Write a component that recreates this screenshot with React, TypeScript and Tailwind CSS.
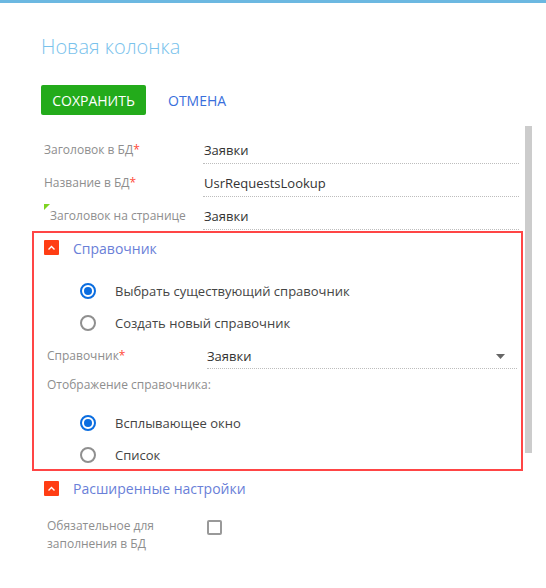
import React from "react";

const font = { fontFamily: '"Open Sans", "Liberation Sans", sans-serif' };

function Radio({ checked }: { checked?: boolean }) {
  return checked ? (
    <span className="w-[16px] h-[16px] rounded-full border-[2px] border-[#0a6de0] flex items-center justify-center shrink-0">
      <span className="w-[8px] h-[8px] rounded-full bg-[#0a6de0]" />
    </span>
  ) : (
    <span className="w-[16px] h-[16px] rounded-full border-[2px] border-[#8f8f8f] shrink-0" />
  );
}

function Chevron() {
  return (
    <span className="w-[15px] h-[15px] bg-[#ff3d14] flex items-center justify-center shrink-0 rounded-[1px]">
      <svg width="9" height="6" viewBox="0 0 9 6" fill="none">
        <path d="M1.5 4.5 L4.5 1.5 L7.5 4.5" stroke="white" strokeWidth="1.4" />
      </svg>
    </span>
  );
}

function FieldRow({ label, value, req, mark }: { label: string; value: string; req?: boolean; mark?: boolean }) {
  return (
    <div className="flex h-[33px]">
      <div className="w-[162px] pl-[3px] pt-[9px] leading-[20px] text-[12px] text-[#8e8e8e] relative">
        {mark && (
          <span className="absolute left-[3px] top-[7px] w-0 h-0 border-t-[6px] border-t-[#7ed321] border-r-[6px] border-r-transparent" />
        )}
        <span className={mark ? "pl-[6px]" : ""}>{label}</span>
        {req && <span className="text-[#ff4a3a]">*</span>}
      </div>
      <div className="w-[316px] pt-[9px] pb-[3px] leading-[20px] text-[13px] text-[#333] border-b border-dotted border-[#bdbdbd] pl-[1px]">
        {value}
      </div>
    </div>
  );
}

export default function App() {
  return (
    <div className="w-[546px] h-[588px] bg-white overflow-hidden" style={font}>
      <div className="h-[3px] bg-[#6cb8e1]" />
      <div className="pl-[41px] pt-[30px] text-[20px] leading-[28px] font-light text-[#79c2ec]">Новая колонка</div>
      <div className="pl-[41px] mt-[24px] flex items-center">
        <div className="h-[30px] w-[105px] bg-[#23ab1b] rounded-[2px] text-white text-[14px] flex items-center justify-center">СОХРАНИТЬ</div>
        <div className="ml-[22px] text-[14px] text-[#3a6fdc]">ОТМЕНА</div>
      </div>
      <div className="flex mt-[11px]">
        <div className="w-[523px] pt-[5px]">
          <div className="pl-[41px]">
            <FieldRow label="Заголовок в БД" value="Заявки" req />
            <FieldRow label="Название в БД" value="UsrRequestsLookup" req />
            <FieldRow label="Заголовок на странице" value="Заявки" mark />
          </div>
          <div className="ml-[32px] mt-[1px] h-[240px] border-[2px] border-[#ff4545]">
            <div className="flex items-start pl-[10px] pt-[6px]">
              <span className="mt-[1px]"><Chevron /></span>
              <span className="ml-[14px] text-[14px] leading-[20px] text-[#6a80d8]">Справочник</span>
            </div>
            <div className="pl-[46px] mt-[22px] flex flex-col gap-[12px]">
              <div className="flex items-center h-[20px]">
                <Radio checked />
                <span className="ml-[19px] text-[13px] leading-[20px] text-[#444]">Выбрать существующий справочник</span>
              </div>
              <div className="flex items-center h-[20px]">
                <Radio />
                <span className="ml-[19px] text-[13px] leading-[20px] text-[#444]">Создать новый справочник</span>
              </div>
            </div>
            <div className="flex pl-[13px] mt-[13px]">
              <div className="w-[160px] leading-[20px] text-[12px] text-[#8e8e8e]">
                Справочник<span className="text-[#ff4a3a]">*</span>
              </div>
              <div className="w-[310px] pb-[2px] leading-[20px] text-[13px] text-[#333] border-b border-dotted border-[#bdbdbd] flex items-center justify-between">
                <span>Заявки</span>
                <svg width="9" height="5" viewBox="0 0 9 5" className="mr-[12px]">
                  <path d="M0 0 H9 L4.5 5 Z" fill="#666" />
                </svg>
              </div>
            </div>
            <div className="pl-[13px] mt-[6px] leading-[20px] text-[12px] text-[#8e8e8e]">Отображение справочника:</div>
            <div className="pl-[46px] mt-[18px] flex flex-col gap-[12px]">
              <div className="flex items-center h-[20px]">
                <Radio checked />
                <span className="ml-[19px] text-[13px] leading-[20px] text-[#444]">Всплывающее окно</span>
              </div>
              <div className="flex items-center h-[20px]">
                <Radio />
                <span className="ml-[19px] text-[13px] leading-[20px] text-[#444]">Список</span>
              </div>
            </div>
          </div>
          <div className="flex items-start pl-[44px] mt-[8px]">
            <span className="mt-[2px]"><Chevron /></span>
            <span className="ml-[14px] text-[14px] leading-[20px] text-[#6a80d8]">Расширенные настройки</span>
          </div>
          <div className="flex pl-[47px] mt-[18px]">
            <div className="w-[160px] text-[12px] leading-[18px] text-[#8e8e8e]">
              Обязательное для<br />заполнения в БД
            </div>
            <span className="mt-[3px] w-[15px] h-[15px] rounded-[2px] border-[2px] border-[#999]" />
          </div>
        </div>
        <div className="ml-[2px] w-[7px] h-[327px] bg-[#cccccc]" />
      </div>
    </div>
  );
}
